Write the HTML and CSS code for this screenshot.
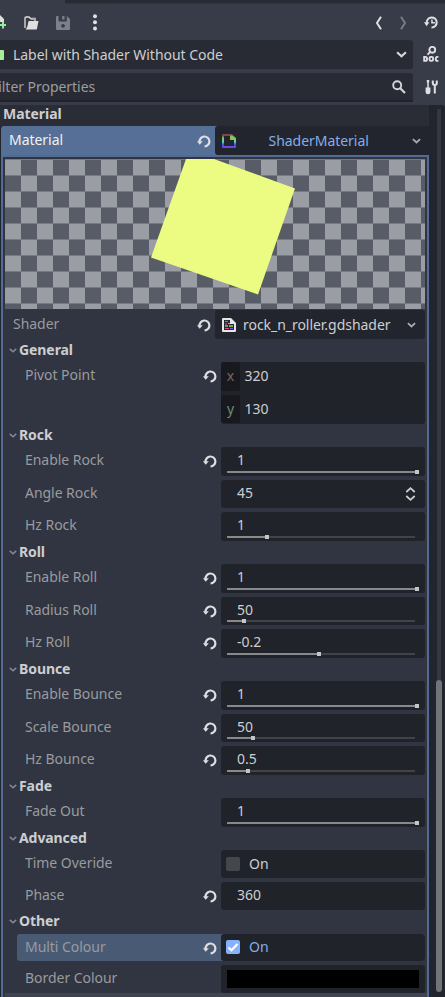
FILE: index.html
```
<!DOCTYPE html>
<html lang="en">
<head>
<meta charset="utf-8">
<title>Inspector</title>
<link rel="stylesheet" href="styles.css">
</head>
<body>
<svg width="0" height="0" class="defs">
  <symbol id="reset" viewBox="0 0 14 14"><path d="M2.6 7.8A4.9 4.9 0 1 1 7.6 12.3" fill="none" stroke="currentColor" stroke-width="2.2"/><path d="M0 7.2H5.8L2.7 10.8Z" fill="currentColor"/></symbol>
  <symbol id="down" viewBox="0 0 10 6"><path d="M1 1l4 3.6L9 1" fill="none" stroke="currentColor" stroke-width="2"/></symbol>
</svg>
<div class="tabline"></div>
<header class="tools">
  <svg class="new" viewBox="0 0 6 15"><path d="M0 0l4 4v3H0z" fill="#e0e0e0"/><path d="M3 6.5v7M0 10h6" stroke="#8eef97" stroke-width="2"/></svg>
  <svg class="open" viewBox="0 0 15 14"><path d="M1 12V2.2Q1 1 2.2 1H5l1.5 1.5H11V5" fill="none" stroke="#e0e0e0" stroke-width="1.3"/><path d="M5.5 5H14.5L12.8 13.5H1.5Q3.5 12 4.2 6.2Q4.4 5 5.5 5Z" fill="#e0e0e0"/><path d="M7 2H12V4H7z" fill="#aaadb3"/></svg>
  <svg class="save" viewBox="0 0 14 14"><path fill-rule="evenodd" d="M1 0H2.5V4.5Q2.5 5.5 3.5 5.5H9.8Q10.8 5.5 10.8 4.5V0L14 3V13Q14 14 13 14H1Q0 14 0 13V1Q0 0 1 0ZM7 8a1.9 1.9 0 1 0 .01 0ZM6.2 0H8.5V3.5H6.2Z" fill="#7c808a"/></svg>
  <svg class="dots" viewBox="0 0 4 17" fill="#e0e0e0"><circle cx="2" cy="2.3" r="2"/><circle cx="2" cy="8.3" r="2"/><circle cx="2" cy="14.5" r="2"/></svg>
  <svg class="prev" viewBox="0 0 8 14"><path d="M6 .8L2 7l4 6.2" fill="none" stroke="#e0e0e0" stroke-width="2"/></svg>
  <svg class="next" viewBox="0 0 8 14"><path d="M2 .8L6 7l-4 6.2" fill="none" stroke="#777b85" stroke-width="2"/></svg>
  <svg class="history" viewBox="0 0 14 13"><path d="M2.8 7.4A5 5 0 1 1 7.5 11.4" fill="none" stroke="#e0e0e0" stroke-width="2"/><path d="M0 6.2H5.4L2.6 10.2ZM7.2 3.5h1.5v2.6h2.2v1.5H7.2z" fill="#e0e0e0"/></svg>
</header>
<div class="bar node">
  <div class="input"><i class="swatch"></i><span>Label with Shader Without Code</span><svg class="arrow"><use href="#down"/></svg></div>
  <svg class="doc" viewBox="0 0 16 16" fill="none" stroke="#e0e0e0" stroke-width="1.9"><circle cx="9.3" cy="3.8" r="2.9"/><path d="M7.3 5.8L4.5 8.6M1.2 10.9v4h1.2q1.6 0 1.6-2t-1.6-2zM15.4 10.9h-1.2q-1.4 0-1.4 2t1.4 2h1.2"/><rect x="6.5" y="10.9" width="3.6" height="4" rx="1.4"/></svg>
</div>
<div class="bar filter">
  <div class="input"><span>Filter Properties</span><svg class="search" viewBox="0 0 14 14"><circle cx="5.2" cy="5.2" r="4" fill="none" stroke="#d3d4d6" stroke-width="1.9"/><path d="M8 8l5 5" stroke="#d3d4d6" stroke-width="2.2"/></svg></div>
  <svg class="wrench" viewBox="0 0 13 15"><path d="M3 1v7" stroke="#e0e0e0" stroke-width="1.5"/><path d="M1.8 0h2.4v2.5H1.8zM.6 7.5H5.4V12Q5.4 14.2 3 14.2T.6 12Z" fill="#e0e0e0"/><path d="M7.8.5V3Q7.8 5 9.8 5T11.8 3V.5M9.8 5v8.5" fill="none" stroke="#e0e0e0" stroke-width="2"/></svg>
</div>
<main class="panel">
  <div class="props">
    <div class="category">Material</div>
    <div class="resource">
      <div class="res-name"><span>Material</span><svg class="reset"><use href="#reset"/></svg></div>
      <div class="res-value"><svg class="file" viewBox="0 0 14 14"><defs><linearGradient id="rainbow" x2="0" y2="1"><stop offset="0" stop-color="#8a3f55"/><stop offset=".12" stop-color="#6b5338"/><stop offset=".3" stop-color="#83c653"/><stop offset=".55" stop-color="#58d6c4"/><stop offset=".75" stop-color="#3558ef"/><stop offset="1" stop-color="#913bd5"/></linearGradient></defs><path fill-rule="evenodd" d="M1 0H10L14 4V13Q14 14 13 14H1Q0 14 0 13V1Q0 0 1 0ZM2 2V12H12V6H8V2Z" fill="url(#rainbow)"/><path d="M8 1.5H10.5L14 5V6H8Z" fill="#83c653"/></svg><span>ShaderMaterial</span><svg class="small-arrow"><use href="#down"/></svg></div>
    </div>
    <div class="body">
      <svg class="preview" viewBox="0 0 420 150">
        <defs><pattern id="checks" width="32" height="32" patternUnits="userSpaceOnUse"><path d="M0 0H32V32H0Z" fill="#575c67"/><path d="M0 0H16V16H0ZM16 16H32V32H16Z" fill="#9b9da5"/><path d="M0 16.5H32M0 .5H32" stroke="#777a84"/></pattern></defs>
        <path d="M0 0H420V150H0Z" fill="url(#checks)"/><path d="M181 0H209L290 29.5L253 135.5L146 98.5Z" fill="#ecfc83"/>
      </svg>
      <div class="shader"><span class="name">Shader</span><svg class="reset"><use href="#reset"/></svg>
        <div class="field"><svg class="file" viewBox="0 0 14 14"><path d="M1 0H9L14 5V13Q14 14 13 14H1Q0 14 0 13V1Q0 0 1 0Z" fill="#e6e6e6"/><path d="M2 2H8V6H12V12H2Z" fill="#252731"/><path d="M3 3.5H6" stroke="#ff4545" stroke-width="1.2"/><path d="M3 6H5M3 10.5H7" stroke="#ec4a86" stroke-width="1.2"/><path d="M6 5.5H8" stroke="#45d7ff"/><path d="M3 8H6" stroke="#80ff45" stroke-width="1.2"/><path d="M7 8H11" stroke="#c8fa58" stroke-width="1.2"/><path d="M8 10.5H11" stroke="#705bea" stroke-width="1.2"/></svg><span>rock_n_roller.gdshader</span><svg class="small-arrow"><use href="#down"/></svg></div>
      </div>

      <h2 class="first"><svg><use href="#down"/></svg>General</h2>
      <div class="row"><label>Pivot Point</label><svg class="reset"><use href="#reset"/></svg><div class="field vector"><div><b class="x">x</b>320</div><div><b class="y">y</b>130</div></div></div>

      <h2><svg><use href="#down"/></svg>Rock</h2>
      <div class="row"><label>Enable Rock</label><svg class="reset"><use href="#reset"/></svg><div class="field num">1<div class="track"><i style="width:192px"></i></div></div></div>
      <div class="row"><label>Angle Rock</label><div class="field num">45<svg class="spin" viewBox="0 0 10 14"><path d="M.8 5L5 1.2 9.2 5M.8 9L5 12.8 9.2 9" fill="none" stroke="#cdced0" stroke-width="1.8"/></svg></div></div>
      <div class="row"><label>Hz Rock</label><div class="field num">1<div class="track"><i style="width:41.5px"></i></div></div></div>

      <h2><svg><use href="#down"/></svg>Roll</h2>
      <div class="row"><label>Enable Roll</label><svg class="reset"><use href="#reset"/></svg><div class="field num">1<div class="track"><i style="width:192px"></i></div></div></div>
      <div class="row"><label>Radius Roll</label><svg class="reset"><use href="#reset"/></svg><div class="field num">50<div class="track"><i style="width:18.5px"></i></div></div></div>
      <div class="row"><label>Hz Roll</label><svg class="reset"><use href="#reset"/></svg><div class="field num">-0.2<div class="track"><i style="width:94px"></i></div></div></div>

      <h2><svg><use href="#down"/></svg>Bounce</h2>
      <div class="row"><label>Enable Bounce</label><svg class="reset"><use href="#reset"/></svg><div class="field num">1<div class="track"><i style="width:192px"></i></div></div></div>
      <div class="row"><label>Scale Bounce</label><svg class="reset"><use href="#reset"/></svg><div class="field num">50<div class="track"><i style="width:27.5px"></i></div></div></div>
      <div class="row"><label>Hz Bounce</label><svg class="reset"><use href="#reset"/></svg><div class="field num">0.5<div class="track"><i style="width:22.5px"></i></div></div></div>

      <h2><svg><use href="#down"/></svg>Fade</h2>
      <div class="row"><label>Fade Out</label><div class="field num">1<div class="track"><i style="width:192px"></i></div></div></div>

      <h2><svg><use href="#down"/></svg>Advanced</h2>
      <div class="row short"><label>Time Overide</label><div class="field check"><i class="box"></i>On</div></div>
      <div class="row"><label>Phase</label><svg class="reset"><use href="#reset"/></svg><div class="field num">360</div></div>

      <h2><svg><use href="#down"/></svg>Other</h2>
      <div class="row short selected"><label>Multi Colour</label><svg class="reset"><use href="#reset"/></svg><div class="field check on"><svg class="box" viewBox="0 0 14 14"><path d="M2.5 7.5L5.5 10.3L11.5 4" fill="none" stroke="#fff" stroke-width="2.2"/></svg>On</div></div>
      <div class="row short"><label>Border Colour</label><div class="field color"><i></i></div></div>
      <div class="foot"></div>
    </div>
  </div>
  <div class="scroll"><i></i></div>
</main>
</body>
</html>
```

FILE: styles.css
```
* { box-sizing: border-box; }
body { margin: 0; width: 445px; height: 997px; overflow: hidden; background: #373c48; color: #cdced0; font: 14px/20px "Noto Sans", sans-serif; letter-spacing: -0.04px; display: flex; flex-direction: column; }
svg { display: block; flex: none; }
.defs { position: absolute; }
.tabline { height: 4px; margin-left: 65px; background: #272b34; flex: none; border-bottom: 1px solid #303540; }
.tools { height: 36px; display: flex; align-items: center; padding-top: 1px; flex: none; }
.new { width: 6px; height: 15px; }
.open { width: 15px; height: 14px; margin-left: 18px; }
.save { width: 14px; height: 14px; margin-left: 17px; }
.dots { width: 4px; height: 17px; margin-left: 23px; }
.prev { width: 8px; height: 14px; margin-left: 278px; }
.next { width: 8px; height: 14px; margin-left: 16px; }
.history { width: 14px; height: 13px; margin-left: 17px; }
.bar { display: flex; height: 29px; flex: none; align-items: center; }
.bar .input { width: 413px; height: 100%; background: #282b34; border-radius: 0 3px 3px 0; display: flex; align-items: center; }
.node .swatch { width: 4px; height: 10px; background: #a9eb9b; border-radius: 0 1px 1px 0; margin-right: 9px; }
.arrow { width: 11px; height: 7px; margin-left: auto; margin-right: 6px; color: #d6d7d9; }
.doc { width: 16px; height: 16px; margin-left: 10px; }
.node .doc { margin-top: -1px; }
.filter { margin-top: 4px; }
.filter .input { color: #9b9da2; border-bottom: 2px solid #20232b; border-radius: 0 3px 0 0; }
.filter span { margin-left: -9px; }
.search { width: 14px; height: 14px; margin-left: auto; margin-right: 7px; }
.wrench { width: 13px; height: 15px; margin-left: 12px; }
.panel { flex: 1; margin-top: 3px; display: flex; background: #22252e; border-top-right-radius: 3px; }
.props { width: 429px; }
.category { height: 21px; background: #2a2d36; font-weight: 700; line-height: 17px; padding-left: 3px; }
.resource { height: 29px; display: flex; margin-left: 1px; background: #556f96; border-radius: 3px 0 0 0; }
.res-name { width: 214px; display: flex; align-items: center; padding: 0 4px 0 8px; color: #f0f1f3; }
.res-name span { margin-top: -2px; }
.reset { width: 14px; height: 14px; margin-left: auto; color: #dedfe1; }
.res-value { flex: 1; background: #22252e; display: flex; align-items: center; padding: 1px 8px 0 7px; color: #86ace9; border-radius: 3px 0 0 3px; }
.file { width: 14px; height: 14px; }
.res-value span { margin-left: 32.5px; }
.small-arrow { width: 9px; height: 6px; margin-left: auto; color: #aaaaad; }
.body { margin-left: 1px; height: 842px; border: 2px solid #516b94; border-bottom: 0; background: #303541; display: flex; flex-direction: column; }
.preview { width: 420px; height: 150px; margin: 2px 0 0 2px; }
.shader { height: 30px; padding: 1px 2px 0 10px; display: flex; align-items: center; }
.name, label { color: #999b9f; }
.name { margin-top: -2px; }
.shader .reset { margin-right: 4px; }
.shader .field { width: 210px; height: 29px; background: #22252e; border-radius: 3px; display: flex; align-items: center; padding: 0 9px 0 7px; }
.shader .field span { margin-left: 7px; }
h2 { margin: 0; height: 23.5px; font: 700 14px/21px "Noto Sans", sans-serif; letter-spacing: -0.08px; display: flex; align-items: flex-start; padding-left: 6px; flex: none; }
h2 svg { width: 8px; height: 5px; margin: 9px 2px 0 0; color: #85888f; }
h2.first { height: 23px; }
.row { min-height: 28.5px; display: flex; margin: 0 2px 0 14px; align-items: flex-start; flex: none; }
.row + .row { margin-top: 4px; }
.row.short { min-height: 27.5px; }
label { padding-left: 8px; line-height: 26px; }
.row .reset { margin-top: 7px; }
.row .field { width: 204px; height: 28.5px; background: #20232a; border-radius: 3px; margin-left: 4px; flex: none; }
.row > label + .field { margin-left: auto; }
.row.short .field { height: 27.5px; }
.row .vector { height: 61.5px; }
.vector div { height: 28.5px; line-height: 27px; display: flex; }
.vector div + div { margin-top: 4px; }
.vector b { width: 19px; margin-right: 4.5px; background: #18191e; border-radius: 3px; text-align: center; font-weight: 400; }
.x { color: #7c655f; }
.y { color: #6b8f70; }
.num { padding-left: 16px; line-height: 26px; position: relative; }
.track { position: absolute; left: 6px; bottom: 3px; width: 188px; height: 2px; background: #414349; }
.track i { display: block; position: relative; height: 2px; background: #88898c; }
.track i::after { content: ""; position: absolute; right: 0; top: -1px; width: 4px; height: 4px; background: #c4c5c7; }
.spin { position: absolute; width: 11px; height: 14px; right: 9px; top: 7px; }
.check { display: flex; align-items: center; padding-left: 5px; }
.box { width: 14px; height: 14px; background: #45474e; border-radius: 2px; margin-right: 9px; }
.on { color: #86ace9; }
.on .box { background: #84b2ff; }
.selected { background: #495a75; border-radius: 3px; }
.color { padding: 5px 6px; }
.color i { display: block; height: 18px; background: #000; }
.foot { margin: auto 0 0 2px; height: 4px; background: #404450; flex: none; }
.scroll { width: 16px; padding: 4px 3px 0 8px; }
.scroll::before { content: ""; display: block; width: 4px; height: 571px; background: #343740; }
.scroll i { display: block; width: 6px; margin-left: -1px; height: 312px; background: #717378; border-radius: 3px; }
```
